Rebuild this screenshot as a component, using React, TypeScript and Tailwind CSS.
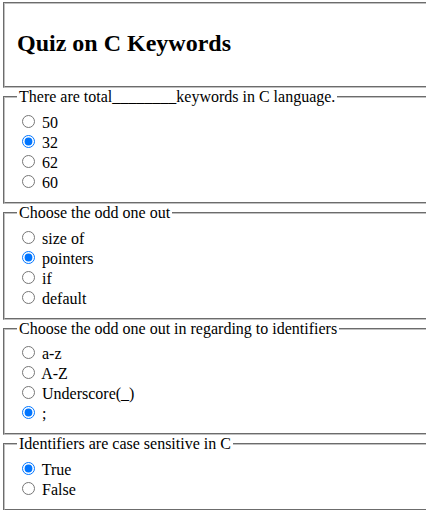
import { useState } from "react";

const questions = [
  {
    name: "q1",
    legend: "There are total________keywords in C language.",
    options: ["50", "32", "62", "60"],
    picked: "32",
  },
  {
    name: "q2",
    legend: "Choose the odd one out",
    options: ["size of", "pointers", "if", "default"],
    picked: "pointers",
  },
  {
    name: "q3",
    legend: "Choose the odd one out in regarding to identifiers",
    options: ["a-z", "A-Z", "Underscore(_)", ";"],
    picked: ";",
  },
  {
    name: "q4",
    legend: "Identifiers are case sensitive in C",
    options: ["True", "False"],
    picked: "True",
  },
];

const boxCls =
  "ml-[3px] w-[560px] border-2 border-[rgb(192,192,192)] [border-style:groove] pt-[0.35em] px-[0.75em] pb-[0.625em]";

export default function App() {
  const [answers, setAnswers] = useState<Record<string, string>>(
    Object.fromEntries(questions.map((q) => [q.name, q.picked]))
  );

  return (
    <div className="w-full overflow-hidden pt-[2px] font-['Liberation_Serif',serif] text-[16px] leading-[normal] text-black">
      {/* Title box */}
      <fieldset className={boxCls}>
        <h2 className="my-[0.83em] text-[24px] font-bold">Quiz on C Keywords</h2>
      </fieldset>

      {questions.map((q) => (
        <fieldset key={q.name} className={boxCls}>
          <legend className="px-[2px]">{q.legend}</legend>
          {q.options.map((opt) => (
            <label key={opt} className="block">
              <input
                type="radio"
                name={q.name}
                value={opt}
                checked={answers[q.name] === opt}
                onChange={() => setAnswers((a) => ({ ...a, [q.name]: opt }))}
                className="mt-[3px] mr-[3px] mb-0 ml-[5px]"
              />{" "}
              {opt}
            </label>
          ))}
        </fieldset>
      ))}
    </div>
  );
}
